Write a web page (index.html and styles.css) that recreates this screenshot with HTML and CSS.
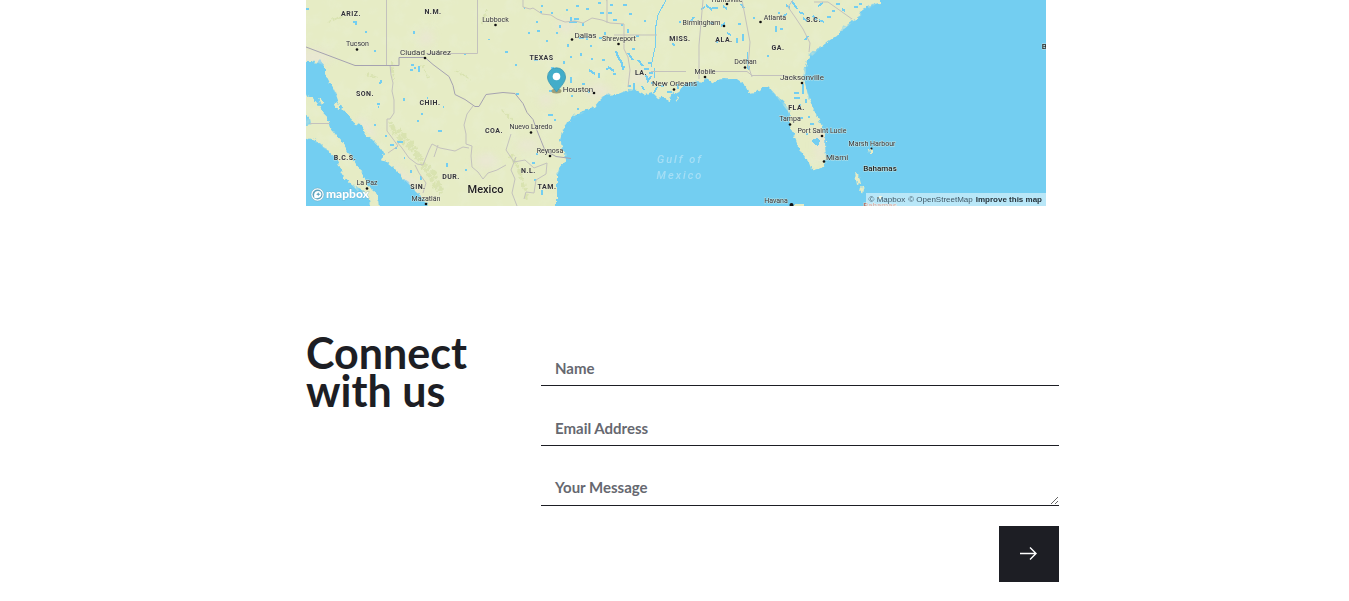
FILE: index.html
```html
<!DOCTYPE html>
<html lang="en">
<head>
<meta charset="utf-8">
<meta name="viewport" content="width=device-width, initial-scale=1">
<title>Connect with us</title>
<link rel="stylesheet" href="styles.css">
</head>
<body>
<main class="page">
  <section class="map" aria-label="Location map">
    <svg class="map-canvas" viewBox="0 0 740 206" role="img" aria-label="Map of Texas and the Gulf of Mexico">
      <defs>
        <filter id="rough" x="0" y="0" width="740" height="206" filterUnits="userSpaceOnUse">
          <feTurbulence type="fractalNoise" baseFrequency="0.25" numOctaves="2" seed="4" result="n"/>
          <feDisplacementMap in="SourceGraphic" in2="n" scale="5" xChannelSelector="R" yChannelSelector="G"/>
        </filter>
        <filter id="relief" x="0" y="0" width="740" height="206" filterUnits="userSpaceOnUse">
          <feTurbulence type="fractalNoise" baseFrequency="0.06" numOctaves="4" seed="9" result="n"/>
          <feColorMatrix in="n" type="matrix" values="0 0 0 0 0.8  0 0 0 0 0.85  0 0 0 0 0.6  3 0 0 0 -1.5" result="c"/>
          <feComposite in="c" in2="SourceGraphic" operator="in"/>
        </filter>
        <filter id="soft"><feGaussianBlur stdDeviation="4"/></filter>
        <clipPath id="landclip"><path d="M0 0V61H8L19 66 24 83 37 109 56 125 77 151 97 178 123 206H251V175L260 160 254 139 263 121 288 107 299 95 332 91 399 80 431 79 443 93 463 87 484 114 497 155 511 170 520 158 519 135 506 106 499 83 500 63 515 47 552 18 575 0Z"/></clipPath>
      </defs>
      <rect width="740" height="206" fill="#73cef1"/>
      <g class="land" filter="url(#rough)">
        <path d="M-5-5V61H8L10 64 14 60 19 66V73L24 83 29 92 33 103 37 109 42 115 49 124 56 125 60 136 67 140 72 145 77 151 78 154 75 160 81 162 87 167 93 173 97 178 103 183 108 190 115 196 121 203 123 212H251V175L253 169 258 163 260 160 259 153 256 147 254 139 257 129 263 121 268 115 277 111 288 107 293 101 299 95 312 94 322 90 332 91 340 95 346 93 352 99 357 96 362 100 367 92 372 94 378 84 390 81 399 82V78L408 83 414 79H431L438 84 443 93 450 92 457 87H463L470 95 477 101 482 108 484 114 483 122 485 130 489 138 492 146 497 155 503 163 505 168 511 170 518 167 520 158 519 146V135L515 124 510 115 506 106 502 95 499 83 497 76 500 63 504 54 510 49 515 47 524 40 531 36 537 27 545 21 552 18 554 12 565 4 575 3V-5Z"/>
        <path d="M-4 93 6 97 12 104 18 112 22 120 24 127 30 135 36 142 40 148 44 155 49 163 55 170 60 181 66 190 72 195 73 210H65L62 196 55 189 45 184 37 177 34 167 30 158 22 151 14 143 7 140-4 136V127L5 125 4 118-4 111Z"/>
        <path d="M12 98l4 2 2 5-4-2zM29 104l4-1v6l-3-1zM549 173l4 3 2 8-4 1zM555 187l3 2-1 5-3-2zM563 149h3v4h-2zM488 204h10v5h-10zM571 196h4v3h-4zM542 146l4-2M362 98l3 1-2 3zM370 96l3 2-2 3z"/>
      </g>
      <path filter="url(#relief)" d="M0 0V61H8L19 66 24 83 37 109 56 125 77 151 97 178 123 206H251V175L260 160 254 139 263 121 288 107 299 95 332 91 399 80 431 79 443 93 463 87 484 114 497 155 511 170 520 158 519 135 506 106 499 83 500 63 515 47 552 18 575 0ZM0 95 12 106 23 127 43 157 60 184 72 198V206H65L45 184 34 167 22 151 0 136Z"/>
      <g clip-path="url(#landclip)">
        <g fill="#ece4dd" opacity=".6" filter="url(#soft)"><ellipse cx="7" cy="57" rx="18" ry="7"/><ellipse cx="120" cy="38" rx="7" ry="8"/><ellipse cx="60" cy="129" rx="14" ry="5" transform="rotate(40 60 129)"/><ellipse cx="180" cy="161" rx="12" ry="7"/><ellipse cx="100" cy="180" rx="22" ry="5" transform="rotate(40 100 180)"/><ellipse cx="260" cy="26" rx="10" ry="5"/><ellipse cx="292" cy="91" rx="14" ry="6"/><ellipse cx="334" cy="77" rx="14" ry="6"/><ellipse cx="240" cy="100" rx="7" ry="6"/><ellipse cx="222" cy="145" rx="12" ry="5"/><ellipse cx="514" cy="145" rx="5" ry="18"/></g>
        <g fill="none" stroke="#cbd99b" stroke-width="4" opacity=".5" stroke-dasharray="3 2 6 1" filter="url(#rough)"><path d="M84 121l5 12 8 9 9 7 7 13 10 12 5 11 8 9"/><path d="M92 130l8 8 9 9 8 16 11 10 7 17M205 155l6 10 5 14 5 20"/><path stroke-width="2" d="M86 62l2 18M181 10l-6 14M116 65l6 12M60 74l12 4M150 70l14 10M22 22l14-6M196 110l10 10"/></g>
      </g>
      <!-- rivers and lakes -->
      <g class="lakes">
        <path d="M0 9h3M47 22h4M49 24h2M59 32h2M68 51h2M73 83h2M75 80v3M71 104h3M72 107h1M98 98v3M108 31v3M104 70h3M108 68h2M113 66v6M105 65h3M121 98h1M137 107h1M115 114h2M111 121h2M132 131h4M68 125h2M79 136h2M84 145h4M91 142h6M98 158h1M105 170v3M115 176v4M141 163v4M159 170h2M183 39v1M158 54h2M90 147v2M199 52h3M209 65h2M210 94h3M222 33h2M230 22h2M241 40v2M228 60h4M245 68h3M251 75h4M258 61v3M264 57h2M268 19h5M263 22h8M265 17v5M277 23v3M294 13h4M304 5h3M307 20h4M281 36v4M273 38h5M262 44v3M284 46h2M293 38h3M299 32v3M275 53v3M285 59h2M296 60h3M283 70l6 4M293 73v5M300 69h2M265 77v6M276 84h3M283 90v3M265 96h2M271 109h2M242 115h5M249 119v2M243 91h3M230 154h2M226 163h3M228 180h2M236 190v5M254 25v3M231 31h3M250 33h2M245 13h2M235 6h2M260 10h2M270 6h3M280 9h3M292 3h3M218 8h1M234 12h2M302 13h4M317 5h4M323 14h3M315 25h2M322 29v4M330 36h3M338 21h2M326 49h3M322 53l5 7M332 60l5 6M342 63h3M338 69h5M307 74h3M317 67h2M310 51l2 6 4 6 1 7M302 67l6 4"/>
        <path class="river" d="M360 0l-8 15-3 16 1 12-3 14-2 10M348 68v10M441 52v17M12 61"/>
        <path d="M343 73h4M340 75l2 6 3-5M367 43l1 3M373 22h2M388 17l-3 4M395 9l4-2M406 8h6M417 6l4 3M435 4l3 4M415 26l4-3M421 33l4 2M431 38v5M437 34v7M432 24h3M410 42h2M404 23h3M448 17v2M443 66v4M462 55v2M470 26v6M474 29h3M472 13h2M486 1l5 8M480 5l4 3M497 18l4 3M493 12l5 2M507 16l4 4M513 20l5 2M521 17h4M502 36l-3 4M497 84v10M488 93h5M488 98h6M500 99v4M494 104v2M494 118h3M502 117h2M504 124h4M500 134h2M515 84h2M328 90v-7M351 87l-3 6M338 90l-2-4M355 86h3M361 92h5M372 84v5M322 86h3M345 83h3M400 5l6 5M481 14l-4 2M530 4h4M548 7h4M536 9l3 2M553 4h3M560 7h2M512 6l5-3M526 11h3"/>
        <path class="lake" d="M507 139l5-1 2 3-2 5-3-1-3-3z"/>
      </g>
      <!-- state and country borders -->
      <g class="borders">
        <path d="M80.500 0V65M171.500 0V53.500H120M4 123.500H24M84 65l1 10 2 8-1 8 2 9v13l-4 6h-3v12l6 8 5 7-10 7M91 142l5 6 7 10 8 6 6 1 6-15 3-6 8 4 15 3 8-4 6 1M167 106l-6 8-3 11 2 9v10l6 2-1 10 1 11 6 5 5 7 5-6 9-3 9-5M217 0v7l7 2 3-1 9 6 9 1 6 4 8 3 10-1 8 2 9-5 10 2 8 3 14 1V49l4 8 2 13-2 17M300 0h1v23M308 35h43M345 71.500h35M397 0l-4 45v34M396 71.500h45l5 4h32l11 3M436 0l8 42-1 13-1 10 4 12M487 0l-5 7 7 10 8 12 7 14-1 9M508 2h14l24 17M205 134l-5 16 8 12 11-2 9 8 13-5-1 11-10 6-2 13-8-1-2 7M210 157l-5 13 4 9-3 14 5 13M109 165l4 8 7 10-3 10M132 145l-4 12"/>
        <path class="national" d="M0 47l49 18.500h44V57.500h26l8 7 8 6 8 6 4 9 2 9 10 5 10 7h4l7-12 17-2 12 1 8 10 4 9 6 7 4 11 4 10 4 10 11 6 15 2"/>
      </g>
      <g class="dots"><circle cx="51" cy="49.500" r="1.300"/><circle cx="119" cy="58" r="1.300"/><circle cx="189.500" cy="25" r="1.300"/><circle cx="266" cy="39.500" r="1.300"/><circle cx="312.500" cy="44" r="1.300"/><circle cx="288" cy="93" r="1.300"/><circle cx="225" cy="132.500" r="1.300"/><circle cx="244" cy="156" r="1.300"/><circle cx="61" cy="188.500" r="1.300"/><circle cx="120" cy="204" r="1.300"/><circle cx="368" cy="89.500" r="1.300"/><circle cx="399" cy="77" r="1.300"/><circle cx="439" cy="67.500" r="1.300"/><circle cx="418" cy="26" r="1.300"/><circle cx="421" cy="4" r="1.300"/><circle cx="454.500" cy="22" r="1.300"/><circle cx="496" cy="83" r="1.300"/><circle cx="484" cy="124.500" r="1.300"/><circle cx="516" cy="136" r="1.300"/><circle cx="518" cy="161.500" r="1.300"/><circle cx="485.500" cy="205" r="2"/><circle cx="565.500" cy="148.500" r="1"/></g>
      <g class="state"><text x="45" y="16">ARIZ.</text><text x="127" y="14">N.M.</text><text x="59" y="96">SON.</text><text x="124" y="104.500">CHIH.</text><text x="188" y="132.500">COA.</text><text x="39" y="160">B.C.S.</text><text x="145" y="179">DUR.</text><text x="112" y="188.500">SIN.</text><text x="222.500" y="173">N.L.</text><text x="241" y="188.500">TAM.</text><text x="235.500" y="59.500">TEXAS</text><text x="335" y="75">LA.</text><text x="374" y="41">MISS.</text><text x="418" y="41.500">ALA.</text><text x="472" y="50">GA.</text><text x="507.500" y="21.500">S.C.</text><text x="490.500" y="110">FLA.</text></g>
      <g class="city"><text x="51.500" y="46">Tucson</text><text class="big" x="119.500" y="54.500">Ciudad Juárez</text><text x="189.500" y="22">Lubbock</text><text class="big" x="279.500" y="37.500">Dallas</text><text x="313" y="41">Shreveport</text><text class="big" x="272" y="91.500">Houston</text><text x="225" y="129">Nuevo Laredo</text><text x="244" y="153">Reynosa</text><text x="61" y="185">La Paz</text><text x="120" y="201">Mazatlán</text><text class="big" x="368.500" y="86">New Orleans</text><text x="399" y="74">Mobile</text><text x="439.500" y="64">Dothan</text><text x="395.500" y="24.500">Birmingham</text><text x="421" y="1.500">Huntsville</text><text x="469" y="20">Atlanta</text><text class="big" x="496" y="79.500">Jacksonville</text><text x="484" y="121">Tampa</text><text x="516" y="133">Port Saint Lucie</text><text class="big" x="531" y="159.500">Miami</text><text x="566" y="145.500">Marsh Harbour</text><text x="470" y="203">Havana</text></g>
      <g class="country"><text x="179.500" y="193">Mexico</text><text class="small" x="574" y="171">Bahamas</text><text class="small faded" x="574" y="208">Bahamas</text><text class="small" x="752" y="49">Bermuda</text></g>
      <g class="gulf"><text x="374" y="163">Gulf of</text><text x="374" y="179">Mexico</text></g>
      <!-- location pin -->
      <ellipse cx="250.500" cy="91" rx="5" ry="2.500" fill="#6f6c45" opacity=".6"/>
      <path d="M250.500 92C248 88 241.500 83 241.500 77a9 9.200 0 0 1 18 0c0 6-6.500 11-9 15Z" fill="#43adc9" stroke="#3a96b1" stroke-width=".8"/>
      <circle cx="250.500" cy="76.500" r="3.800" fill="#fff"/>
      <!-- provider mark -->
      <circle cx="11.500" cy="194.500" r="6.500" fill="#fff" stroke="#6fa9bf" stroke-opacity=".5"/>
      <circle cx="11.500" cy="194.500" r="5" fill="#5fa3bd"/>
      <path d="M8.500 198c-1-4 0-7 3.500-7 4 0 4.500 5 1.500 6.500-1.500.8-3.500.8-5 .5Z" fill="#fff"/>
      <path d="m12.200 192.200.7 1.400 1.500.6-1.500.7-.7 1.400-.6-1.400-1.500-.7 1.500-.6Z" fill="#5fa3bd"/>
      <text class="brand" x="20" y="198">mapbox</text>
    </svg>
    <div class="credits"><a href="#">© Mapbox</a> <a href="#">© OpenStreetMap</a> <a class="improve" href="#">Improve this map</a></div>
  </section>

  <section class="contact">
    <h2 class="contact-title">Connect with us</h2>
    <form class="contact-form">
      <input class="field" type="text" aria-label="Name" placeholder="Name">
      <input class="field" type="email" aria-label="Email Address" placeholder="Email Address">
      <textarea class="field" rows="1" aria-label="Your Message" placeholder="Your Message"></textarea>
      <button class="send" type="submit" aria-label="Send">
        <svg width="18" height="14" viewBox="0 0 18 14" fill="none" stroke="#fff" stroke-width="1.400"><path d="M0 6.500h16M10 .500l6 6-6 6"/></svg>
      </button>
    </form>
  </section>
</main>
</body>
</html>
```
FILE: styles.css
```css
* { box-sizing: border-box; }

body {
  margin: 0;
  background: #fff;
  color: #1d1e24;
  font-family: Lato, "Open Sans", sans-serif;
}

.page {
  max-width: 769px;
  margin: 0 auto;
  padding: 0 0 16px 16px;
}

.map {
  position: relative;
  margin-right: 13px;
  overflow: hidden;
}

.map-canvas {
  display: block;
  width: 100%;
  font-family: Roboto, sans-serif;
  text-anchor: middle;
}

.land { fill: #e6ecc5; }
.lakes { fill: none; stroke: #73cef1; stroke-width: 2; shape-rendering: crispEdges; }
.lakes .river { stroke-width: 1; }
.lakes .lake { fill: #73cef1; stroke: none; }
.borders { fill: none; stroke: #c3c1bd; stroke-width: 1; }
.borders .national { stroke: #a5a2b0; }
.dots { fill: #111; }

.state, .city, .country {
  fill: #33343a;
  stroke: #f0f0dc;
  stroke-opacity: 0.6;
  stroke-width: 1px;
  stroke-linejoin: round;
  paint-order: stroke;
}

.state { font-size: 7px; font-weight: 700; letter-spacing: 0.5px; }
.city { font-size: 7px; }
.city .big { font-size: 8px; }
.country { font-size: 11px; font-weight: 500; fill: #222; }
.country .small { font-size: 8px; }
.country .faded { fill: #b46e64; }
.gulf { fill: #a5def5; font-size: 11px; font-style: italic; font-weight: 500; letter-spacing: 2px; }

.brand {
  fill: #fff;
  stroke: #6fa9bf;
  stroke-opacity: 0.5;
  stroke-width: 1px;
  paint-order: stroke;
  font-family: Lato, sans-serif;
  font-size: 12px;
  font-weight: 900;
  text-anchor: start;
}

.credits {
  position: absolute;
  right: 0;
  bottom: 0;
  display: flex;
  gap: 3px;
  padding: 0 4px 0 3px;
  background: rgba(255, 255, 255, 0.5);
  font: 8px/13px "Liberation Sans", Arial, sans-serif;
  white-space: nowrap;
}

.credits a { color: #405866; text-decoration: none; }
.credits .improve { color: #26343c; font-weight: 700; }

.contact {
  display: flex;
  flex-wrap: wrap;
  margin-top: 128px;
}

.contact-title {
  flex: 0 0 235px;
  margin: 0;
  padding-right: 60px;
  font-size: 43px;
  font-weight: 700;
  line-height: 38px;
}

.contact-form {
  flex: 1 1 300px;
  display: flex;
  flex-direction: column;
  gap: 24px;
  padding-top: 16px;
}

.field {
  display: block;
  width: 100%;
  height: 36px;
  padding: 7px 14px;
  border: 0;
  border-bottom: 1px solid #1d1e24;
  border-radius: 0;
  background: transparent;
  color: #1d1e24;
  font: 700 15px/20px Lato, sans-serif;
}

textarea.field { overflow: hidden; resize: vertical; }
.field::placeholder { color: #666870; opacity: 1; }

.send {
  display: flex;
  align-items: center;
  justify-content: center;
  align-self: flex-end;
  width: 60px;
  height: 56px;
  margin-top: -4px;
  padding: 0;
  border: 0;
  background: #1d1e24;
}
```
